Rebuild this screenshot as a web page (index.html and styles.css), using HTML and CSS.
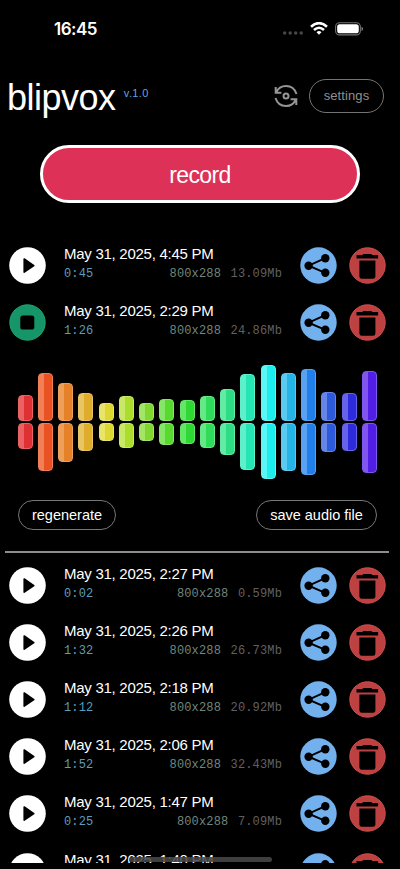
FILE: index.html
```html
<!DOCTYPE html>
<html lang="en">
<head>
<meta charset="utf-8">
<title>blipvox</title>
<link rel="stylesheet" href="styles.css">
</head>
<body>
<svg class="defs" aria-hidden="true">
  <symbol id="play" viewBox="0 0 37 37"><circle cx="18.5" cy="18.5" r="18.3" fill="#fff"/><path d="M15.2 12v13.2l9.6-6.6z" fill="#000" stroke="#000" stroke-width="1.6" stroke-linejoin="round"/></symbol>
  <symbol id="stop" viewBox="0 0 37 37"><circle cx="18.5" cy="18.5" r="17.7" fill="#169568" stroke="#20a574"/><rect x="11.3" y="11.5" width="14" height="14" rx="2.6" fill="#000"/></symbol>
  <symbol id="share" viewBox="0 0 37 37"><circle cx="18.5" cy="18.5" r="18.2" fill="#73b1ee"/><path d="M25.3 11.2L8.6 18.7l16.7 7.1" fill="none" stroke="#000" stroke-width="2"/><circle cx="25.3" cy="11.2" r="4.2"/><circle cx="8.6" cy="18.7" r="4.2"/><circle cx="25.3" cy="25.8" r="4.2"/></symbol>
  <symbol id="trash" viewBox="0 0 37 37"><circle cx="18.5" cy="18.5" r="17.7" fill="#be4141" stroke="#cf5050"/><path d="M7.5 7.9h5.8l1-.9h8l1 .9h5.8v3.6H7.5zM10.4 13.6h16v15.8q0 2.4-2.4 2.4H12.8q-2.4 0-2.4-2.4z" fill="#000"/></symbol>
</svg>
<div class="phone">
  <div class="status">
    <span class="clock">16:45</span>
    <div class="indicators">
      <svg class="cell" viewBox="0 0 20 4"><g fill="#484848"><circle cx="1.7" cy="2" r="1.7"/><circle cx="7.2" cy="2" r="1.7"/><circle cx="12.7" cy="2" r="1.7"/><circle cx="18.2" cy="2" r="1.7"/></g></svg>
      <svg class="wifi" viewBox="0 0 18 13"><g fill="none" stroke="#fff" stroke-width="2.5"><path d="M1 4.7Q9-2.5 17 4.7"/><path d="M4 8Q9 3.4 14 8"/></g><path d="M9 12.8L6.5 10.2Q9 8 11.5 10.2z" fill="#fff"/></svg>
      <svg class="battery" viewBox="0 0 29 14"><rect x=".6" y=".6" width="25.2" height="12.4" rx="4" fill="none" stroke="#747474" stroke-width="1.1"/><rect x="2.2" y="2.2" width="22" height="9.2" rx="2.6" fill="#fff"/><path d="M27 4.6q1.5.5 1.5 2.2T27 9z" fill="#888"/></svg>
    </div>
  </div>
  <header class="header">
    <h1 class="logo">blipvox</h1>
    <span class="version">v.1.0</span>
    <svg class="flip" viewBox="0 0 24 24" fill="none" stroke="#959595" stroke-width="2"><path d="M1.7 3v5.8h5.7M2.2 8.5Q5 2 12 2q8 0 10.5 8M22.3 21v-5.8h-5.7M21.8 15.5Q19 22 12 22q-8 0-10.5-8"/><circle cx="12" cy="12" r="2.5"/></svg>
    <button class="settings">settings</button>
  </header>
  <button class="record">record</button>
  <main class="list">
    <article class="row"><svg class="icon"><use href="#play"/></svg><div class="info"><div class="date">May 31, 2025, 4:45 PM</div><div class="meta"><span class="time">0:45</span><span class="dims">800x288</span><span class="size">13.09Mb</span></div></div><svg class="icon share"><use href="#share"/></svg><svg class="icon trash"><use href="#trash"/></svg></article>
    <article class="row"><svg class="icon"><use href="#stop"/></svg><div class="info"><div class="date">May 31, 2025, 2:29 PM</div><div class="meta"><span class="time">1:26</span><span class="dims">800x288</span><span class="size">24.86Mb</span></div></div><svg class="icon share"><use href="#share"/></svg><svg class="icon trash"><use href="#trash"/></svg></article>
    <section class="player">
      <div class="wave">
        <div class="col" style="--h:26.3px;--c:#df3033;--l:#eb6264"><i></i><i></i></div>
        <div class="col" style="--h:48.3px;--c:#e95222;--l:#f18058"><i></i><i></i></div>
        <div class="col" style="--h:38.6px;--c:#e48129;--l:#eea05b"><i></i><i></i></div>
        <div class="col" style="--h:28.3px;--c:#dfac2c;--l:#eac565"><i></i><i></i></div>
        <div class="col" style="--h:17.9px;--c:#dcd831;--l:#e8e56a"><i></i><i></i></div>
        <div class="col" style="--h:24.8px;--c:#acdc2c;--l:#c8e968"><i></i><i></i></div>
        <div class="col" style="--h:18px;--c:#7fd730;--l:#a2e567"><i></i><i></i></div>
        <div class="col" style="--h:22.3px;--c:#58d930;--l:#86e667"><i></i><i></i></div>
        <div class="col" style="--h:21.4px;--c:#2fd934;--l:#64e768"><i></i><i></i></div>
        <div class="col" style="--h:25px;--c:#2fdb5b;--l:#65e886"><i></i><i></i></div>
        <div class="col" style="--h:31.9px;--c:#2ddd86;--l:#63eaa5"><i></i><i></i></div>
        <div class="col" style="--h:47px;--c:#25e5b4;--l:#5ef0ca"><i></i><i></i></div>
        <div class="col" style="--h:56px;--c:#1ceeee;--l:#5bf7f7"><i></i><i></i></div>
        <div class="col" style="--h:47.9px;--c:#24b4e5;--l:#5bcaf0"><i></i><i></i></div>
        <div class="col" style="--h:52.3px;--c:#207fe9;--l:#59a2f2"><i></i><i></i></div>
        <div class="col" style="--h:28.9px;--c:#2d59dd;--l:#6585e9"><i></i><i></i></div>
        <div class="col" style="--h:28.2px;--c:#2e2bdd;--l:#6663e9"><i></i><i></i></div>
        <div class="col" style="--h:49.9px;--c:#511ee6;--l:#8056ef"><i></i><i></i></div>
      </div>
      <div class="actions"><button class="pill regen">regenerate</button><button class="pill save">save audio file</button></div>
    </section>
    <article class="row"><svg class="icon"><use href="#play"/></svg><div class="info"><div class="date">May 31, 2025, 2:27 PM</div><div class="meta"><span class="time">0:02</span><span class="dims">800x288</span><span class="size">0.59Mb</span></div></div><svg class="icon share"><use href="#share"/></svg><svg class="icon trash"><use href="#trash"/></svg></article>
    <article class="row"><svg class="icon"><use href="#play"/></svg><div class="info"><div class="date">May 31, 2025, 2:26 PM</div><div class="meta"><span class="time">1:32</span><span class="dims">800x288</span><span class="size">26.73Mb</span></div></div><svg class="icon share"><use href="#share"/></svg><svg class="icon trash"><use href="#trash"/></svg></article>
    <article class="row"><svg class="icon"><use href="#play"/></svg><div class="info"><div class="date">May 31, 2025, 2:18 PM</div><div class="meta"><span class="time">1:12</span><span class="dims">800x288</span><span class="size">20.92Mb</span></div></div><svg class="icon share"><use href="#share"/></svg><svg class="icon trash"><use href="#trash"/></svg></article>
    <article class="row"><svg class="icon"><use href="#play"/></svg><div class="info"><div class="date">May 31, 2025, 2:06 PM</div><div class="meta"><span class="time">1:52</span><span class="dims">800x288</span><span class="size">32.43Mb</span></div></div><svg class="icon share"><use href="#share"/></svg><svg class="icon trash"><use href="#trash"/></svg></article>
    <article class="row"><svg class="icon"><use href="#play"/></svg><div class="info"><div class="date">May 31, 2025, 1:47 PM</div><div class="meta"><span class="time">0:25</span><span class="dims">800x288</span><span class="size">7.09Mb</span></div></div><svg class="icon share"><use href="#share"/></svg><svg class="icon trash"><use href="#trash"/></svg></article>
    <article class="row"><svg class="icon"><use href="#play"/></svg><div class="info"><div class="date">May 31, 2025, 1:40 PM</div></div><svg class="icon share"><use href="#share"/></svg><svg class="icon trash"><use href="#trash"/></svg></article>
  </main>
  <div class="home"></div>
</div>
</body>
</html>
```
FILE: styles.css
```css
* { box-sizing: border-box; }
body { margin: 0; background: #000; color: #fff; font-family: "Liberation Sans", Arial, sans-serif; }
button { margin: 0; padding: 0; font-family: inherit; color: #fff; background: none; }
svg { display: block; flex: none; }
.defs { position: absolute; width: 0; height: 0; }
.phone { position: relative; display: flex; flex-direction: column; width: 400px; height: 869px; overflow: hidden; }

.status { display: flex; justify-content: space-between; height: 58px; padding: 0 37px 0 54px; flex: none; }
.clock { padding-top: 19px; font: 600 17px/20px Inter, sans-serif; letter-spacing: -0.5px; }
.indicators { display: flex; }
.cell { width: 20px; height: 4px; margin: 31px 6.5px 0 0; }
.wifi { width: 18px; height: 13px; margin: 22px 7px 0 0; }
.battery { width: 28.5px; height: 14px; margin-top: 22px; }

.header { display: flex; align-items: center; height: 75px; padding: 0 16px 0 7px; flex: none; }
.logo { margin: 4px 0 0; font-size: 36px; font-weight: 400; line-height: 42px; letter-spacing: -0.5px; }
.version { margin: -5px 0 0 8.3px; color: #5fa5e6; font-size: 11px; line-height: 14px; letter-spacing: 0.35px; }
.flip { width: 24px; height: 24px; margin: 0 11px 0 auto; }
.settings { width: 75px; height: 34px; border: 1px solid #747474; border-radius: 17px; color: #909090; font-size: 13px; letter-spacing: 0.1px; }

.record { flex: none; width: 320px; height: 58px; margin: 12.4px auto 0; padding-top: 2px; border: 3px solid #fff; border-radius: 29px; background: #dd3158; font-size: 23px; letter-spacing: -0.6px; }

.list { height: 626.7px; margin-top: 33.3px; flex: none; overflow: hidden; }
.row { display: flex; align-items: center; height: 57.2px; padding-left: 9px; }
.icon { width: 37px; height: 37px; }
.info { width: 218px; height: 41px; margin-left: 18px; }
.date { font-size: 15px; line-height: 18px; letter-spacing: -0.27px; white-space: nowrap; }
.meta { display: flex; padding-top: 4px; font: 12px/14px "Liberation Mono", "Courier New", monospace; letter-spacing: 0.15px; }
.time { color: #5c9dbd; }
.dims { margin-left: auto; color: #71867c; }
.size { margin-left: 9.5px; color: #606060; }
.share { margin-left: 18px; }
.trash { margin-left: 12px; }

.player { width: 384px; height: 202px; margin: 0 0 3.5px 5px; padding-top: 10px; border-bottom: 2px solid #8d8d8d; }
.wave { display: grid; grid-template-columns: repeat(18, 15px); column-gap: 5.25px; height: 122px; padding-left: 12.6px; align-items: center; }
.col { display: grid; row-gap: 1.8px; }
.col i { height: var(--h); border: 1px solid var(--l); border-radius: 4px; background: linear-gradient(90deg, var(--l) 0 5px, var(--c) 5px); }
.actions { display: flex; justify-content: space-between; padding: 17px 12px 0 13px; }
.pill { height: 30px; border: 1px solid #777; border-radius: 15px; font-size: 14.5px; }
.regen { width: 98px; }
.save { width: 121px; }

.home { position: absolute; left: 129px; top: 857px; width: 143px; height: 5px; border-radius: 3px; background: rgba(72, 72, 72, .88); }
```
